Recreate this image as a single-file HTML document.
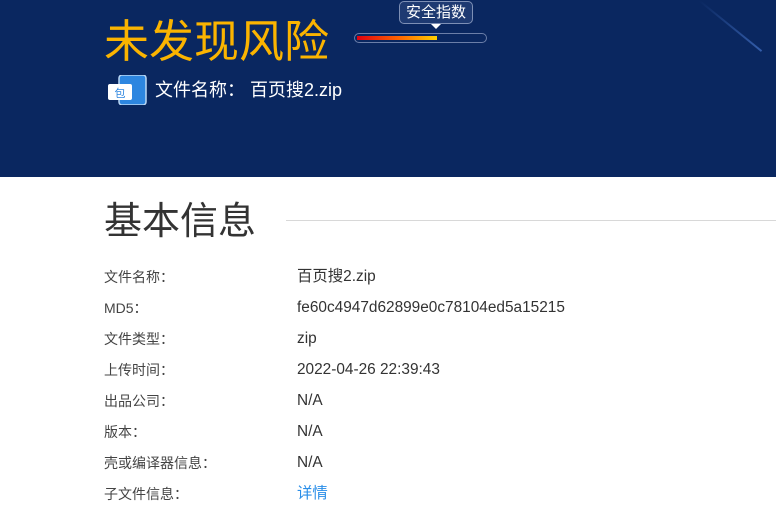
<!DOCTYPE html>
<html><head><meta charset="utf-8"><style>
*{margin:0;padding:0;box-sizing:border-box}
body{width:776px;height:522px;overflow:hidden;background:#fff;font-family:"Liberation Sans","Noto Sans CJK SC",sans-serif;position:relative}
.hd{position:absolute;left:0;top:0;width:776px;height:177px;background:#0a2760;overflow:hidden}
.streak{position:absolute;left:700px;top:0;width:80px;height:2px;background:linear-gradient(90deg,rgba(80,130,220,0),rgba(80,130,220,.6));transform-origin:0 0;transform:rotate(39deg)}
.title{position:absolute;left:104px;top:14px;font-size:45px;color:#fbb400;line-height:56px}
.tip{position:absolute;left:399px;top:1px;width:74px;height:23px;border:1px solid #7d8fb5;border-radius:5px;background:#1e3a72;color:#fff;font-size:15px;line-height:21px;text-align:center}
.tip:after{content:"";position:absolute;left:31px;bottom:-6px;border:5px solid transparent;border-top:5px solid #fff;border-bottom:0}
.bar{position:absolute;left:354px;top:33px;width:133px;height:10px;border:1.5px solid #6b7ea8;border-radius:5px;background:#0a2760}
.bar i{position:absolute;left:2px;top:1.5px;width:80px;height:4px;background:linear-gradient(90deg,#e00010,#ff6a00 55%,#ffd200)}
.ic{position:absolute;left:107px;top:75px;width:40px;height:30px}
.fn{position:absolute;left:155px;top:78px;color:#fff;font-size:18px;line-height:24px}
h1{position:absolute;left:104px;top:196px;font-size:38px;font-weight:normal;color:#333;line-height:52px}
.line{position:absolute;left:286px;top:220px;width:490px;height:1px;background:#d8d8d8}
.row{position:absolute;left:104px;font-size:14px;color:#444;line-height:20px}
.v{position:absolute;left:297px;font-size:15.4px;color:#333;line-height:20px}
</style></head><body>
<div class="hd">
<div class="streak"></div>
<div class="title">未发现风险</div>
<div class="tip">安全指数</div>
<div class="bar"><i></i></div>
<svg class="ic" viewBox="0 0 40 30"><rect x="12" y="0" width="27" height="30" rx="3" fill="#2d86e0" stroke="#bcd8f5" stroke-width="1.5"/><rect x="1" y="9" width="24" height="16" rx="2" fill="#fff"/><text x="13" y="22" font-size="11" fill="#2d86e0" text-anchor="middle" font-family="Noto Sans CJK SC">包</text></svg>
<div class="fn">文件名称：&nbsp;百页搜2.zip</div>
</div>
<h1>基本信息</h1><div class="line"></div>
<div class="row" style="top:267px">文件名称：</div><div class="v" style="top:267px">百页搜2.zip</div>
<div class="row" style="top:298px">MD5：</div><div class="v" style="top:298px">fe60c4947d62899e0c78104ed5a15215</div>
<div class="row" style="top:329px">文件类型：</div><div class="v" style="top:329px">zip</div>
<div class="row" style="top:360px">上传时间：</div><div class="v" style="top:360px">2022-04-26 22:39:43</div>
<div class="row" style="top:391px">出品公司：</div><div class="v" style="top:391px">N/A</div>
<div class="row" style="top:422px">版本：</div><div class="v" style="top:422px">N/A</div>
<div class="row" style="top:453px">壳或编译器信息：</div><div class="v" style="top:453px">N/A</div>
<div class="row" style="top:484px">子文件信息：</div><div class="v" style="top:484px;color:#2a8ee8">详情</div>
</body></html>
